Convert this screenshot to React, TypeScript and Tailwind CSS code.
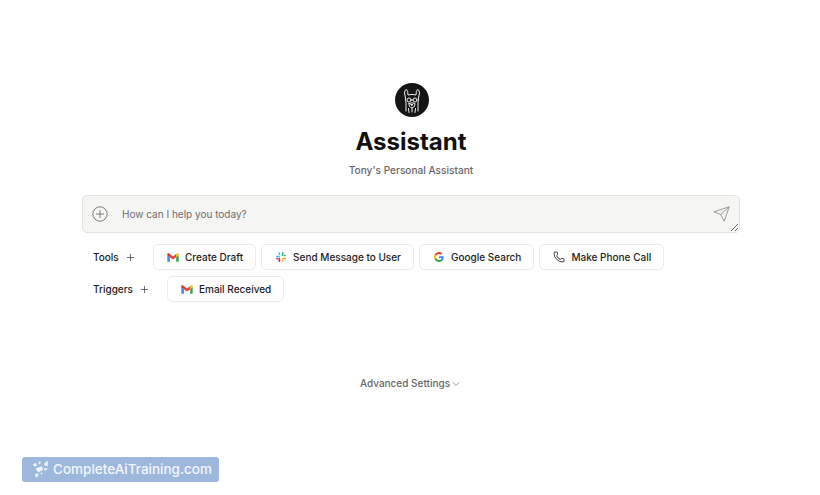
import React from "react";
import { Plus, ChevronDown, Phone } from "lucide-react";

const Gmail = () => (
  <svg width="12" height="9" viewBox="0 0 13 10" className="shrink-0">
    <path d="M0.2 2.2 L0.2 9.2 Q0.2 9.8 0.9 9.8 L3 9.8 L3 4.4 Z" fill="#4285f4" />
    <path d="M10 9.8 L12.1 9.8 Q12.8 9.8 12.8 9.2 L12.8 2.2 L10 4.4 Z" fill="#34a853" />
    <path d="M3 4.6 L6.5 7.2 L10 4.6 L10 1.2 L6.5 3.8 L3 1.2 Z" fill="#ea4335" />
    <path d="M0.2 2.2 L3 4.4 L3 1.2 L2 0.5 Q0.2 -0.4 0.2 1.6 Z" fill="#c5221f" />
    <path d="M10 1.2 L10 4.4 L12.8 2.2 L12.8 1.6 Q12.8 -0.4 11 0.5 Z" fill="#fbbc04" />
  </svg>
);

const Slack = () => (
  <svg width="10" height="10" viewBox="0 0 11 11" className="shrink-0">
    <rect x="0" y="4" width="4.4" height="1.8" rx="0.9" fill="#36c5f0" />
    <rect x="2.8" y="0.3" width="1.8" height="3.2" rx="0.9" fill="#36c5f0" />
    <rect x="6.4" y="0" width="1.8" height="4.6" rx="0.9" fill="#2eb67d" />
    <rect x="8.4" y="3" width="2.4" height="1.8" rx="0.9" fill="#2eb67d" />
    <rect x="6.4" y="6.4" width="4.6" height="1.8" rx="0.9" fill="#ecb22e" />
    <rect x="6.4" y="8.4" width="1.8" height="2.4" rx="0.9" fill="#ecb22e" />
    <rect x="2.8" y="6.4" width="1.8" height="4.6" rx="0.9" fill="#e01e5a" />
    <rect x="0.2" y="6.4" width="2.4" height="1.8" rx="0.9" fill="#e01e5a" />
  </svg>
);

const Google = () => (
  <svg width="10" height="10" viewBox="0 0 48 48" className="shrink-0">
    <path fill="#EA4335" d="M24 9.5c3.5 0 6.7 1.2 9.2 3.6l6.9-6.9C35.9 2.4 30.5 0 24 0 14.6 0 6.5 5.4 2.6 13.2l8 6.2C12.5 13.7 17.8 9.5 24 9.5z" />
    <path fill="#4285F4" d="M47 24.5c0-1.6-.1-3.100-.4-4.500H24v9h12.900c-.6 3-2.200 5.500-4.700 7.200l7.700 6c4.500-4.200 7.100-10.300 7.100-17.700z" />
    <path fill="#FBBC05" d="M10.600 28.600c-.5-1.400-.8-3-.8-4.600s.3-3.200.8-4.600l-8-6.200C.9 16.500 0 20.100 0 24s.9 7.500 2.600 10.800l8-6.200z" />
    <path fill="#34A853" d="M24 48c6.500 0 11.900-2.100 15.900-5.800l-7.700-6c-2.200 1.400-4.900 2.300-8.200 2.300-6.200 0-11.500-4.200-13.400-9.900l-8 6.200C6.500 42.600 14.600 48 24 48z" />
  </svg>
);

const Llama = () => (
  <svg width="34" height="34" viewBox="0 0 34 34" className="ml-[2px]">
    <circle cx="17" cy="17" r="17" fill="#151515" />
    <g fill="none" stroke="#eeeeee" strokeWidth="1" strokeLinecap="round" strokeLinejoin="round">
      <path d="M10.500 15 L9.500 10 Q9.800 6.500 11.500 6.500 Q13 7.500 13 12 Q17 10.800 21 12 Q21 7.500 22.500 6.500 Q24.200 6.500 24.500 10 L23.500 15" />
      <path d="M10.500 15 Q9.800 17.500 11 19 L11 28 M23.500 15 Q24.200 17.500 23 19 L23 28" />
      <circle cx="14" cy="17" r="2" />
      <circle cx="20" cy="17" r="2" />
      <path d="M16 17 L18 17 M14 20.500 Q17 19 20 20.500 Q20.500 24 17 25 Q13.500 24 14 20.500 Z" />
      <path d="M16 21.500 L18 21.500 L17 22.500 Z M13.500 25.500 L14 29.500 M20.500 25.500 L20 29.500 M17 25 L17 29" />
    </g>
  </svg>
);

const Watermark = () => (
  <svg width="17" height="17" viewBox="0 0 17 17" className="shrink-0">
    <g fill="#eef3fa">
      <path d="M1 3 L4 2 L5 5 L2 5.500 Z" />
      <path d="M7 0.500 L9 1 L8 3.500 L6.500 2.500 Z" />
      <path d="M13 1.500 L16 0 L15.500 5.500 L12 4 Z" />
      <path d="M3.500 7.500 L10 5 L11 9 L6 11.500 Z" />
      <path d="M11.500 7 L16 7.500 L13 10 Z" />
      <path d="M3 13 L7 12.500 L5 16.500 L3.500 16 Z" />
      <circle cx="9.500" cy="12.500" r="0.900" />
    </g>
  </svg>
);

const Chip = ({ icon, label }: { icon: React.ReactNode; label: string }) => (
  <div className="flex h-[26px] items-center gap-[6px] rounded-[5px] border border-[#ebebe9] bg-white px-[12px] text-[10px] font-medium whitespace-nowrap text-[#1c1c1c]">
    <span className="flex w-[13px] items-center justify-center">{icon}</span>
    {label}
  </div>
);

export default function App() {
  return (
    <div className="relative h-[495px] w-[820px] overflow-hidden bg-white font-['Inter',sans-serif]">
      <div className="flex flex-col items-center pt-[83px] pl-[2px]">
        <Llama />
        <h1 className="mt-[8px] text-[24px] leading-[34px] font-bold text-[#111111]">Assistant</h1>
        <p className="mt-[4px] text-[10.100px] leading-[14px] font-medium text-[#666666]">Tony's Personal Assistant</p>

        <div className="relative mt-[18px] h-[38px] w-[658px]">
          <textarea
            className="block h-[38px] w-full resize-y rounded-[5px] border border-[#e2e2df] bg-[#f5f5f3] pt-[11px] pr-12 pl-[39px] text-[10px] leading-[14px] text-[#333] outline-none placeholder:text-[#6e6e6e]"
            placeholder="How can I help you today?"
          />
          <svg width="16" height="16" viewBox="0 0 16 16" className="absolute top-[11px] left-[10px]">
            <circle cx="8" cy="8" r="7.200" fill="none" stroke="#7d7d7d" strokeWidth="1" />
            <path d="M8 4 V12 M4 8 H12" stroke="#7d7d7d" strokeWidth="1" />
          </svg>
          <svg width="17" height="16" viewBox="0 0 17 16" className="absolute top-[11px] right-[10px]">
            <path d="M0.800 5.800 L16.200 0.800 L11.200 15.200 L7.800 8.500 Z M7.800 8.500 L16.200 0.800" fill="none" stroke="#9a9a9a" strokeWidth="1" strokeLinejoin="round" />
          </svg>
        </div>

        <div className="mt-[11px] flex w-[658px] flex-col gap-[6px] pl-[11px]">
          <div className="flex items-center">
            <span className="w-[32px] text-[10px] font-medium text-[#1c1c1c]">Tools</span>
            <Plus size={11} strokeWidth={1.500} className="mr-[17px] text-[#333]" />
            <div className="flex gap-[5px]">
              <Chip icon={<Gmail />} label="Create Draft" />
              <Chip icon={<Slack />} label="Send Message to User" />
              <Chip icon={<Google />} label="Google Search" />
              <Chip icon={<Phone size={12} strokeWidth={1.700} className="text-[#222]" />} label="Make Phone Call" />
            </div>
          </div>
          <div className="flex items-center">
            <span className="w-[46px] text-[10px] font-medium text-[#1c1c1c]">Triggers</span>
            <Plus size={11} strokeWidth={1.500} className="mr-[17px] text-[#333]" />
            <Chip icon={<Gmail />} label="Email Received" />
          </div>
        </div>

        <div className="mt-[74px] flex items-center text-[10px] font-medium text-[#666666]">
          Advanced Settings
          <ChevronDown size={12} strokeWidth={1.300} className="text-[#555]" />
        </div>
      </div>

      <div className="absolute top-[457px] left-[22px] flex h-[25px] w-[197px] items-center gap-[4px] rounded-[3px] bg-[#9db8dc] pl-[10px] text-[13.500px] font-medium whitespace-nowrap text-[#f2f6fb]">
        <Watermark />
        CompleteAiTraining.com
      </div>
    </div>
  );
}
